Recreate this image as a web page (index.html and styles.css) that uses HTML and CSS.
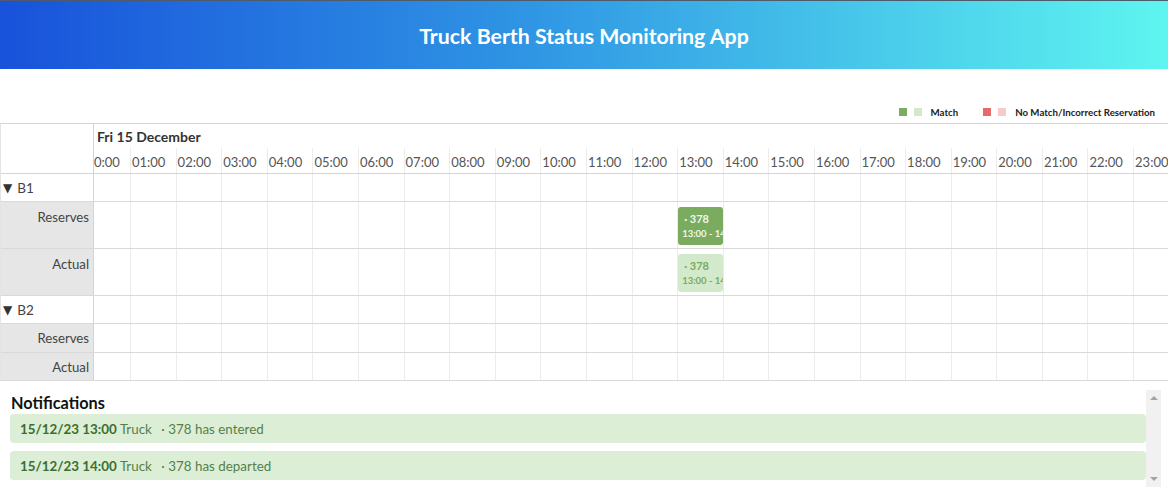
FILE: index.html
```html
<!DOCTYPE html>
<html lang="en">
<head>
<meta charset="utf-8">
<title>Truck Berth Status Monitoring App</title>
<link rel="stylesheet" href="styles.css">
</head>
<body>
<header class="app-header">
  <h1 class="app-title">Truck Berth Status Monitoring App</h1>
</header>

<div class="legend">
  <span class="swatch swatch-match-dark"></span>
  <span class="swatch swatch-match-light"></span>
  <span class="legend-label">Match</span>
  <span class="swatch swatch-bad-dark"></span>
  <span class="swatch swatch-bad-light"></span>
  <span class="legend-label">No Match/Incorrect Reservation</span>
</div>

<div class="scheduler">
  <div class="row row-head">
    <div class="label label-corner"></div>
    <div class="timeline timeline-head">
      <div class="date">Fri 15 December</div>
      <div class="viewport hours-viewport">
        <div class="slots hours">
          <div class="slot hour">00:00</div><div class="slot hour">01:00</div><div class="slot hour">02:00</div><div class="slot hour">03:00</div>
          <div class="slot hour">04:00</div><div class="slot hour">05:00</div><div class="slot hour">06:00</div><div class="slot hour">07:00</div>
          <div class="slot hour">08:00</div><div class="slot hour">09:00</div><div class="slot hour">10:00</div><div class="slot hour">11:00</div>
          <div class="slot hour">12:00</div><div class="slot hour">13:00</div><div class="slot hour">14:00</div><div class="slot hour">15:00</div>
          <div class="slot hour">16:00</div><div class="slot hour">17:00</div><div class="slot hour">18:00</div><div class="slot hour">19:00</div>
          <div class="slot hour">20:00</div><div class="slot hour">21:00</div><div class="slot hour">22:00</div><div class="slot hour">23:00</div>
        </div>
      </div>
    </div>
  </div>

  <div class="row row-group">
    <div class="label label-group"><span class="caret">▼</span><span>B1</span></div>
    <div class="viewport">
      <div class="slots">
        <div class="slot"></div><div class="slot"></div><div class="slot"></div><div class="slot"></div><div class="slot"></div><div class="slot"></div>
        <div class="slot"></div><div class="slot"></div><div class="slot"></div><div class="slot"></div><div class="slot"></div><div class="slot"></div>
        <div class="slot"></div><div class="slot"></div><div class="slot"></div><div class="slot"></div><div class="slot"></div><div class="slot"></div>
        <div class="slot"></div><div class="slot"></div><div class="slot"></div><div class="slot"></div><div class="slot"></div><div class="slot"></div>
      </div>
    </div>
  </div>

  <div class="row row-tall">
    <div class="label label-sub">Reserves</div>
    <div class="viewport">
      <div class="slots">
        <div class="slot"></div><div class="slot"></div><div class="slot"></div><div class="slot"></div><div class="slot"></div><div class="slot"></div>
        <div class="slot"></div><div class="slot"></div><div class="slot"></div><div class="slot"></div><div class="slot"></div><div class="slot"></div>
        <div class="slot"></div>
        <div class="slot slot-event">
          <div class="event event-dark">
            <div class="event-id">· 378</div>
            <div class="event-time">13:00 - 14:00</div>
          </div>
        </div>
        <div class="slot"></div><div class="slot"></div><div class="slot"></div><div class="slot"></div>
        <div class="slot"></div><div class="slot"></div><div class="slot"></div><div class="slot"></div><div class="slot"></div><div class="slot"></div>
      </div>
    </div>
  </div>

  <div class="row row-tall">
    <div class="label label-sub">Actual</div>
    <div class="viewport">
      <div class="slots">
        <div class="slot"></div><div class="slot"></div><div class="slot"></div><div class="slot"></div><div class="slot"></div><div class="slot"></div>
        <div class="slot"></div><div class="slot"></div><div class="slot"></div><div class="slot"></div><div class="slot"></div><div class="slot"></div>
        <div class="slot"></div>
        <div class="slot slot-event">
          <div class="event event-light">
            <div class="event-id">· 378</div>
            <div class="event-time">13:00 - 14:00</div>
          </div>
        </div>
        <div class="slot"></div><div class="slot"></div><div class="slot"></div><div class="slot"></div>
        <div class="slot"></div><div class="slot"></div><div class="slot"></div><div class="slot"></div><div class="slot"></div><div class="slot"></div>
      </div>
    </div>
  </div>

  <div class="row row-group">
    <div class="label label-group"><span class="caret">▼</span><span>B2</span></div>
    <div class="viewport">
      <div class="slots">
        <div class="slot"></div><div class="slot"></div><div class="slot"></div><div class="slot"></div><div class="slot"></div><div class="slot"></div>
        <div class="slot"></div><div class="slot"></div><div class="slot"></div><div class="slot"></div><div class="slot"></div><div class="slot"></div>
        <div class="slot"></div><div class="slot"></div><div class="slot"></div><div class="slot"></div><div class="slot"></div><div class="slot"></div>
        <div class="slot"></div><div class="slot"></div><div class="slot"></div><div class="slot"></div><div class="slot"></div><div class="slot"></div>
      </div>
    </div>
  </div>

  <div class="row row-short">
    <div class="label label-sub">Reserves</div>
    <div class="viewport">
      <div class="slots">
        <div class="slot"></div><div class="slot"></div><div class="slot"></div><div class="slot"></div><div class="slot"></div><div class="slot"></div>
        <div class="slot"></div><div class="slot"></div><div class="slot"></div><div class="slot"></div><div class="slot"></div><div class="slot"></div>
        <div class="slot"></div><div class="slot"></div><div class="slot"></div><div class="slot"></div><div class="slot"></div><div class="slot"></div>
        <div class="slot"></div><div class="slot"></div><div class="slot"></div><div class="slot"></div><div class="slot"></div><div class="slot"></div>
      </div>
    </div>
  </div>

  <div class="row row-short row-last">
    <div class="label label-sub">Actual</div>
    <div class="viewport">
      <div class="slots">
        <div class="slot"></div><div class="slot"></div><div class="slot"></div><div class="slot"></div><div class="slot"></div><div class="slot"></div>
        <div class="slot"></div><div class="slot"></div><div class="slot"></div><div class="slot"></div><div class="slot"></div><div class="slot"></div>
        <div class="slot"></div><div class="slot"></div><div class="slot"></div><div class="slot"></div><div class="slot"></div><div class="slot"></div>
        <div class="slot"></div><div class="slot"></div><div class="slot"></div><div class="slot"></div><div class="slot"></div><div class="slot"></div>
      </div>
    </div>
  </div>
</div>

<section class="notifications">
  <div class="notif-list">
    <h2 class="notif-title">Notifications</h2>
    <div class="notif-item"><b class="notif-time">15/12/23 13:00</b> Truck <span class="truck-id">· 378</span> has entered</div>
    <div class="notif-item"><b class="notif-time">15/12/23 14:00</b> Truck <span class="truck-id">· 378</span> has departed</div>
  </div>
  <div class="fake-scrollbar">
    <span class="arrow arrow-up"></span>
    <span class="arrow arrow-down"></span>
  </div>
</section>
</body>
</html>
```

FILE: styles.css
```css
* { box-sizing: border-box; }

html, body {
  margin: 0;
  padding: 0;
  background: #ffffff;
  font-family: Lato, "Open Sans", sans-serif;
  color: #333;
}

.app-header {
  height: 69px;
  border-top: 1px solid #4d5b6b;
  padding-top: 1px;
  background: linear-gradient(to right, #1852db 0%, #2f95e4 45%, #5ef5f0 100%);
  display: flex;
  align-items: center;
  justify-content: center;
}

.app-title {
  margin: 0;
  color: #ffffff;
  font-size: 21.3px;
  font-weight: 700;
  line-height: 24px;
}

.legend {
  margin-top: 35px;
  height: 16px;
  display: flex;
  align-items: center;
  justify-content: flex-end;
  padding-right: 13px;
  font-size: 9.7px;
  font-weight: 700;
  color: #222;
}

.swatch {
  width: 8px;
  height: 8px;
  margin-right: 7px;
}
.swatch-match-dark { background: #7aab5e; }
.swatch-match-light { background: #d3e9cc; margin-right: 9px; }
.swatch-bad-dark { background: #e8696a; }
.swatch-bad-light { background: #f7c9c9; margin-right: 9px; }
.legend-label { margin-right: 25px; }
.legend-label:last-child { margin-right: 0; }

.scheduler {
  margin-top: 3px;
  border-top: 1px solid #d6d6d6;
  border-left: 1px solid #e4e4e4;
}

.row {
  display: flex;
  border-bottom: 1px solid #d9d9d9;
}
.row-head { height: 50px; border-bottom-color: #d4d4d4; }
.row-group { height: 28px; }
.row-tall { height: 47px; }
.row-short { height: 29px; }
.row-last { height: 28px; }

.label {
  width: 93px;
  flex: none;
  border-right: 1px solid #d4d4d4;
  font-size: 13.2px;
  color: #444;
}
.label-group {
  display: flex;
  align-items: center;
  padding-left: 2px;
  gap: 5px;
  font-size: 13.5px;
}
.caret {
  font-family: "DejaVu Sans", sans-serif;
  font-size: 12px;
  color: #333;
}
.label-sub {
  background: #e6e6e6;
  text-align: right;
  padding-right: 4px;
  padding-top: 6px;
  line-height: 18px;
}
.row-short .label-sub { padding-top: 5px; }

.timeline-head {
  flex: 1;
  min-width: 0;
  display: flex;
  flex-direction: column;
}
.date {
  height: 24px;
  padding-left: 3px;
  padding-top: 3px;
  font-size: 14px;
  line-height: 20px;
  font-weight: 700;
  color: #333;
}

.viewport {
  flex: 1;
  min-width: 0;
  overflow: hidden;
}
.hours-viewport { height: 25px; }

.slots {
  display: flex;
  height: 100%;
  margin-left: -9.6px;
}
.slot {
  width: 45.6px;
  flex: none;
  border-left: 1px solid #ececec;
  height: 100%;
}
.hour {
  font-size: 13px;
  color: #555;
  padding-left: 1px;
  padding-top: 2px;
  line-height: 24px;
  white-space: nowrap;
  overflow: hidden;
}

.slot-event {
  padding-top: 5px;
  padding-bottom: 3px;
}
.event {
  height: 100%;
  border-radius: 3px;
  overflow: hidden;
  white-space: nowrap;
  font-weight: 700;
  padding-left: 4px;
}
.event-dark { background: #7aab5e; color: #eef7e8; }
.event-light { background: #d3e9cc; color: #7aab5e; }
.event-id { padding-top: 5px; padding-left: 2px; font-size: 11px; line-height: 14px; }
.event-time { font-size: 9.5px; line-height: 15px; }

.notifications {
  margin-top: 9px;
  height: 97px;
  display: flex;
  width: 1161px;
}
.notif-list {
  flex: 1;
  min-width: 0;
  padding-left: 10px;
}
.notif-title {
  margin: 0;
  height: 24px;
  padding-left: 1px;
  padding-top: 2px;
  font-size: 16.3px;
  font-weight: 700;
  color: #111;
  line-height: 22px;
}
.notif-item {
  height: 29px;
  margin-bottom: 8px;
  background: #ddeed6;
  border-radius: 4px;
  padding-left: 10px;
  padding-top: 1px;
  font-size: 13.4px;
  line-height: 29px;
  color: #55804a;
}
.notif-time { color: #3b6e30; }
.truck-id { margin-left: 6px; }

.fake-scrollbar {
  width: 15px;
  flex: none;
  background: #f1f1f1;
  display: flex;
  flex-direction: column;
  justify-content: space-between;
  align-items: center;
  padding: 6px 0 6px;
}
.arrow {
  width: 0;
  height: 0;
  border-left: 4px solid transparent;
  border-right: 4px solid transparent;
}
.arrow-up { border-bottom: 4px solid #a3a3a3; }
.arrow-down { border-top: 4px solid #a3a3a3; }
```
